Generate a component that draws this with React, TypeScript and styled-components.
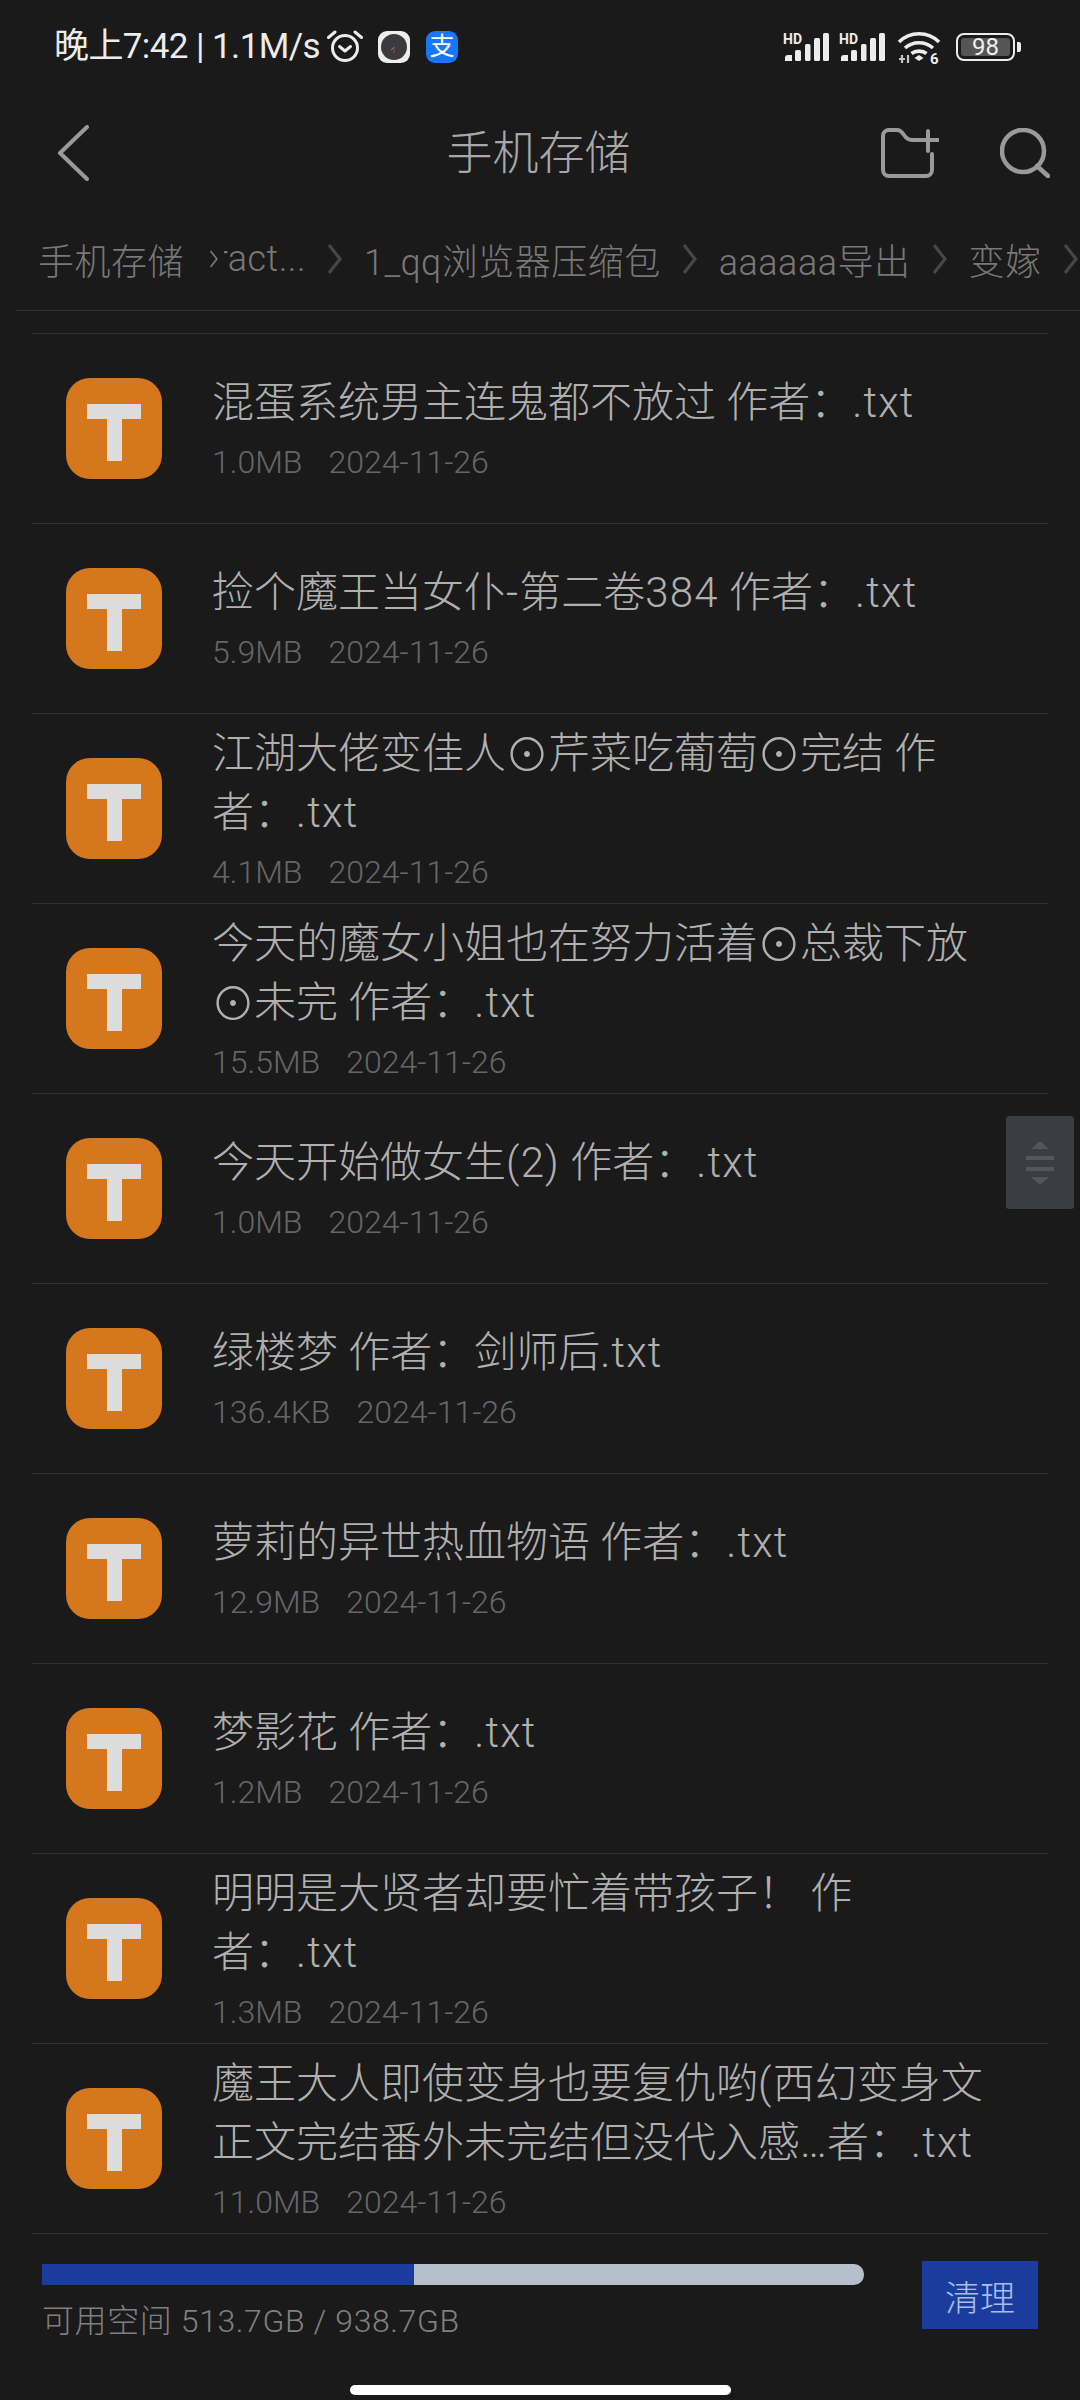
import React from "react";
import styled, { createGlobalStyle } from "styled-components";

const GlobalStyle = createGlobalStyle`
  html, body {
    margin: 0;
    padding: 0;
    background: #1a1a1a;
  }
`;

const sans = `Roboto, "Noto Sans CJK SC", "DejaVu Sans", sans-serif`;

const Page = styled.div`
  position: relative;
  width: 1080px;
  height: 2400px;
  overflow: hidden;
  display: flex;
  flex-direction: column;
  background: #1a1a1a;
  font-family: ${sans};
`;

const StatusBar = styled.div`
  height: 90px;
  flex: none;
  display: flex;
  align-items: center;
  padding: 4px 59px 0 54px;
  box-sizing: border-box;
  color: #ececec;
`;

const StatusText = styled.span`
  font-size: 35px;
  line-height: 50px;
  letter-spacing: -0.6px;
  white-space: nowrap;
`;

const StatusLeft = styled.div`
  display: flex;
  align-items: center;
  flex: 1;
`;

const StatusRight = styled.div`
  display: flex;
  align-items: center;
  gap: 10px;
`;

const AlarmSlot = styled.div`
  display: flex;
  margin: -2px 14px 0 6px;
`;

const AppIcon = styled.div<{ $bg: string }>`
  width: 32px;
  height: 32px;
  margin-right: 16px;
  border-radius: 9px;
  background: ${(p) => p.$bg};
  display: flex;
  align-items: center;
  justify-content: center;
  color: #fff;
  font-size: 25px;
  line-height: 32px;
`;

const WifiSlot = styled.div`
  display: flex;
  margin: 2px 5px 0 2px;
`;

const BatteryWrap = styled.div`
  display: flex;
  align-items: center;
`;

const BatteryBody = styled.div`
  width: 59px;
  height: 28px;
  box-sizing: border-box;
  border: 2px solid #ececec;
  border-radius: 8px;
  padding: 3px;
  display: flex;
`;

const BatteryFill = styled.div`
  flex: 1;
  background: #555;
  border-radius: 3px;
  display: flex;
  align-items: center;
  justify-content: center;
  color: #f0f0f0;
  font-size: 24px;
  line-height: 18px;
`;

const BatteryCap = styled.div`
  width: 4px;
  height: 10px;
  margin-left: 2px;
  background: #ececec;
  border-radius: 0 2px 2px 0;
`;

const Toolbar = styled.div`
  height: 126px;
  flex: none;
  display: flex;
  align-items: center;
  padding: 0 30px 0 57px;
  box-sizing: border-box;
`;

const ToolbarSide = styled.div`
  width: 200px;
  flex: none;
  display: flex;
  align-items: center;
`;

const ToolbarActions = styled(ToolbarSide)`
  justify-content: flex-end;
  gap: 61px;
`;

const ToolbarTitle = styled.h1`
  flex: 1;
  margin: 0 0 0 -30px;
  text-align: center;
  font-size: 46px;
  line-height: 60px;
  font-weight: 300;
  color: #a8a8a8;
`;

const Breadcrumbs = styled.div`
  height: 95px;
  flex: none;
  margin-left: 15px;
  padding: 0 0 9px 23px;
  box-sizing: border-box;
  display: flex;
  align-items: center;
  border-bottom: 1px solid #2f2f2f;
  font-size: 36px;
  font-weight: 300;
  letter-spacing: 0.5px;
  color: #787878;
  white-space: nowrap;
  overflow: hidden;
`;

const PinnedCrumb = styled.span`
  flex: none;
  width: 172px;
`;

const CrumbClip = styled.div`
  flex: none;
  display: flex;
  align-items: center;
`;

const ClippedCrumb = styled.span`
  flex: none;
  width: 82px;
  margin-left: 6px;
  overflow: hidden;
  display: flex;
  justify-content: flex-end;
`;

const Crumb = styled.span`
  flex: none;
`;

const Separator = styled.svg<{ $gap: number }>`
  flex: none;
  margin: 0 ${(p) => p.$gap}px;
`;

const FileList = styled.div`
  flex: 1;
  padding-top: 22px;
  margin: 0 32px;
  min-height: 0;
`;

const Row = styled.div`
  height: 190px;
  box-sizing: border-box;
  border-top: 1px solid #303030;
  display: flex;
  align-items: center;
  padding-left: 34px;
  &:last-child {
    height: 191px;
    border-bottom: 1px solid #303030;
  }
`;

const FileIcon = styled.div`
  position: relative;
  width: 96px;
  height: 101px;
  flex: none;
  margin-right: 50px;
  margin-top: -1px;
  border-radius: 24px;
  background: #d5771c;
`;

const TeeBar = styled.div`
  position: absolute;
  left: 21px;
  top: 26px;
  width: 54px;
  height: 15px;
  background: #dcdcdc;
`;

const TeeStem = styled.div`
  position: absolute;
  left: 41px;
  top: 26px;
  width: 15px;
  height: 57px;
  background: #dcdcdc;
`;

const FileText = styled.div`
  padding-top: 8px;
  min-width: 0;
`;

const TitleLine = styled.div`
  font-size: 42px;
  font-weight: 300;
  line-height: 59px;
  color: #b0b0b0;
  white-space: nowrap;
`;

const Sun = styled.span`
  display: inline-flex;
  justify-content: center;
  align-items: center;
  width: 42px;
  height: 42px;
  font-size: 56px;
  line-height: 42px;
  vertical-align: -7px;
`;

const Latin = styled.span`
  letter-spacing: 1.2px;
`;

const Meta = styled.div`
  display: flex;
  gap: 26px;
  font-size: 32px;
  font-weight: 300;
  line-height: 60px;
  color: #666;
  white-space: nowrap;
`;

const ScrollHandle = styled.div`
  position: absolute;
  left: 1006px;
  top: 1116px;
  width: 68px;
  height: 93px;
  border-radius: 3px;
  background: #3a3d42;
  display: flex;
  align-items: center;
  justify-content: center;
`;

const Footer = styled.div`
  flex: none;
  height: 166px;
  box-sizing: border-box;
  padding: 27px 42px 0;
  display: flex;
  flex-direction: column;
`;

const FooterMain = styled.div`
  display: flex;
  justify-content: space-between;
  align-items: flex-start;
`;

const UsageBlock = styled.div`
  width: 822px;
  padding-top: 3px;
`;

const UsageTrack = styled.div`
  height: 21px;
  background: #b5c0cc;
  border-radius: 0 10px 10px 0;
  overflow: hidden;
`;

const UsageFill = styled.div`
  height: 100%;
  background: #1a3c9c;
`;

const UsageLabel = styled.div`
  margin-top: 14px;
  font-size: 32px;
  font-weight: 300;
  letter-spacing: 0.6px;
  line-height: 44px;
  color: #808080;
  white-space: nowrap;
`;

const CleanButton = styled.button`
  width: 116px;
  height: 68px;
  border: none;
  padding: 0;
  background: #1a3c9c;
  color: #a9bcec;
  font-family: inherit;
  font-size: 35px;
  font-weight: 300;
`;

const HomeBar = styled.div`
  width: 381px;
  height: 10px;
  margin: 42px auto 0;
  border-radius: 5px;
  background: #fff;
`;

function Alarm() {
  return (
    <svg width="38" height="32" viewBox="0 0 38 32" fill="none" stroke="#ececec">
      <circle cx="19" cy="18" r="12.5" strokeWidth="3" />
      <path d="M13.5 16.5l5.5 4.5 5.5-4.5" strokeWidth="3" strokeLinecap="round" strokeLinejoin="round" />
      <path d="M2.5 7.5L9 2M35.5 7.5L29 2" strokeWidth="3" strokeLinecap="round" />
    </svg>
  );
}

function ClockFace() {
  return (
    <svg width="26" height="26" viewBox="0 0 26 26">
      <circle cx="13" cy="13" r="13" fill="#3b3b3e" />
      <path d="M13 13l-3 3" stroke="#888" strokeWidth="1" />
      <path d="M13 13v6" stroke="#a04a4a" strokeWidth="1" />
    </svg>
  );
}

function Signal() {
  return (
    <svg width="46" height="28" viewBox="0 0 46 28" fill="#ececec" overflow="visible">
      <text x="0" y="10.5" fontSize="14" fontWeight="700" fontFamily="Roboto, sans-serif">HD</text>
      <path d="M2 28v-3a3 3 0 0 1 3-3h4v6z" />
      <rect x="12" y="17" width="6" height="11" rx="1.5" />
      <rect x="22" y="11" width="5.5" height="17" rx="1.5" />
      <rect x="31" y="5" width="6" height="23" rx="1.5" />
      <rect x="40" y="0" width="6" height="28" rx="1.5" />
    </svg>
  );
}

function Wifi() {
  return (
    <svg width="44" height="32" viewBox="0 0 44 32" fill="none" stroke="#ececec" strokeWidth="3.6" overflow="visible">
      <path d="M2 10C13 -1 31 -1 42 10" />
      <path d="M8 16c8-7 20-7 28 0" />
      <path d="M14.5 21.5c4-3.2 11-3.2 15 0" />
      <path d="M17.5 26l4.5-3 4.5 3-4.5 3z" fill="#ececec" stroke="none" />
      <path d="M2 27h6M5 23v8M11 23v8" stroke="#c4c4c4" strokeWidth="2.2" />
      <text x="33" y="32" fontSize="15" fontWeight="700" fill="#ececec" stroke="none" fontFamily="Roboto, sans-serif">6</text>
    </svg>
  );
}

function BackArrow() {
  return (
    <svg width="32" height="56" viewBox="0 0 32 56" fill="none" stroke="#9a9a9a" strokeWidth="4" strokeLinecap="round" strokeLinejoin="round">
      <path d="M30 2L3 28l27 26" />
    </svg>
  );
}

function NewFolder() {
  return (
    <svg width="58" height="50" viewBox="0 0 58 50" fill="none" stroke="#9a9a9a" strokeWidth="4" strokeLinecap="round" strokeLinejoin="round">
      <path d="M2 8a6 6 0 0 1 6-6h8c3 0 5 2 7 5 2 3 4 5 8 5h6M51 26v16a6 6 0 0 1-6 6H8a6 6 0 0 1-6-6V8" />
      <path d="M47 3v20M38 12h19" />
    </svg>
  );
}

function Search() {
  return (
    <svg width="50" height="50" viewBox="0 0 50 50" fill="none" stroke="#9a9a9a" strokeWidth="4.5" strokeLinecap="round">
      <circle cx="23" cy="23" r="21" />
      <path d="M37 38l11 10" />
    </svg>
  );
}

function Chevron({ gap, small }: { gap: number; small?: boolean }) {
  return (
    <Separator $gap={gap} width={small ? 8 : 14} height={small ? 18 : 30} viewBox="0 0 14 30" fill="none" stroke={small ? "#777" : "#474747"} strokeWidth={small ? 3 : 3.2}>
      <path d="M1 1l11 14L1 29" />
    </Separator>
  );
}

function HandleGlyph() {
  return (
    <svg width="30" height="44" viewBox="0 0 30 44" fill="#53565b">
      <path d="M15 0l9 8H6z" />
      <rect x="1" y="15" width="28" height="4" />
      <rect x="1" y="26" width="28" height="4" />
      <path d="M15 44l-9-8h18z" />
    </svg>
  );
}

const files = [
  { lines: ["混蛋系统男主连鬼都不放过 作者：.txt"], size: "1.0MB" },
  { lines: ["捡个魔王当女仆-第二卷384 作者：.txt"], size: "5.9MB" },
  { lines: ["江湖大佬变佳人☉芹菜吃葡萄☉完结 作", "者：.txt"], size: "4.1MB" },
  { lines: ["今天的魔女小姐也在努力活着☉总裁下放", "☉未完 作者：.txt"], size: "15.5MB" },
  { lines: ["今天开始做女生(2) 作者：.txt"], size: "1.0MB" },
  { lines: ["绿楼梦 作者：剑师后.txt"], size: "136.4KB" },
  { lines: ["萝莉的异世热血物语 作者：.txt"], size: "12.9MB" },
  { lines: ["梦影花 作者：.txt"], size: "1.2MB" },
  { lines: ["明明是大贤者却要忙着带孩子！ 作", "者：.txt"], size: "1.3MB" },
  { lines: ["魔王大人即使变身也要复仇哟(西幻变身文", "正文完结番外未完结但没代入感…者：.txt"], size: "11.0MB" },
];

// the sun sign comes out small in the fallback font, and latin runs a bit narrow
function TitleText({ text }: { text: string }) {
  return (
    <>
      {text.split(/(☉|[!-~]+)/).map((part, i) => {
        if (part === "☉") return <Sun key={i}>{part}</Sun>;
        if (/^[!-~]+$/.test(part)) return <Latin key={i}>{part}</Latin>;
        return part;
      })}
    </>
  );
}

export default function App() {
  const usedPercent = ((938.7 - 513.7) / 938.7) * 100;

  return (
    <Page>
      <GlobalStyle />
      <StatusBar>
        <StatusLeft>
          <StatusText>晚上7:42 | 1.1M/s</StatusText>
          <AlarmSlot>
            <Alarm />
          </AlarmSlot>
          <AppIcon $bg="#eeeeee">
            <ClockFace />
          </AppIcon>
          <AppIcon $bg="#1677ff">支</AppIcon>
        </StatusLeft>
        <StatusRight>
          <Signal />
          <Signal />
          <WifiSlot>
            <Wifi />
          </WifiSlot>
          <BatteryWrap>
            <BatteryBody>
              <BatteryFill>98</BatteryFill>
            </BatteryBody>
            <BatteryCap />
          </BatteryWrap>
        </StatusRight>
      </StatusBar>

      <Toolbar>
        <ToolbarSide>
          <BackArrow />
        </ToolbarSide>
        <ToolbarTitle>手机存储</ToolbarTitle>
        <ToolbarActions>
          <NewFolder />
          <Search />
        </ToolbarActions>
      </Toolbar>

      <Breadcrumbs>
        <PinnedCrumb>手机存储</PinnedCrumb>
        <CrumbClip>
          <Chevron gap={0} small />
          <ClippedCrumb>ract...</ClippedCrumb>
        </CrumbClip>
        <Chevron gap={22} />
        <Crumb>1_qq浏览器压缩包</Crumb>
        <Chevron gap={22} />
        <Crumb>aaaaaa导出</Crumb>
        <Chevron gap={22} />
        <Crumb>变嫁</Crumb>
        <Chevron gap={22} />
      </Breadcrumbs>

      <FileList>
        {files.map((file) => (
          <Row key={file.lines[0]}>
            <FileIcon>
              <TeeBar />
              <TeeStem />
            </FileIcon>
            <FileText>
              {file.lines.map((line) => (
                <TitleLine key={line}>
                  <TitleText text={line} />
                </TitleLine>
              ))}
              <Meta>
                <span>{file.size}</span>
                <span>2024-11-26</span>
              </Meta>
            </FileText>
          </Row>
        ))}
      </FileList>

      <Footer>
        <FooterMain>
          <UsageBlock>
            <UsageTrack>
              <UsageFill style={{ width: `${usedPercent}%` }} />
            </UsageTrack>
            <UsageLabel>可用空间 513.7GB / 938.7GB</UsageLabel>
          </UsageBlock>
          <CleanButton>清理</CleanButton>
        </FooterMain>
        <HomeBar />
      </Footer>

      <ScrollHandle>
        <HandleGlyph />
      </ScrollHandle>
    </Page>
  );
}
